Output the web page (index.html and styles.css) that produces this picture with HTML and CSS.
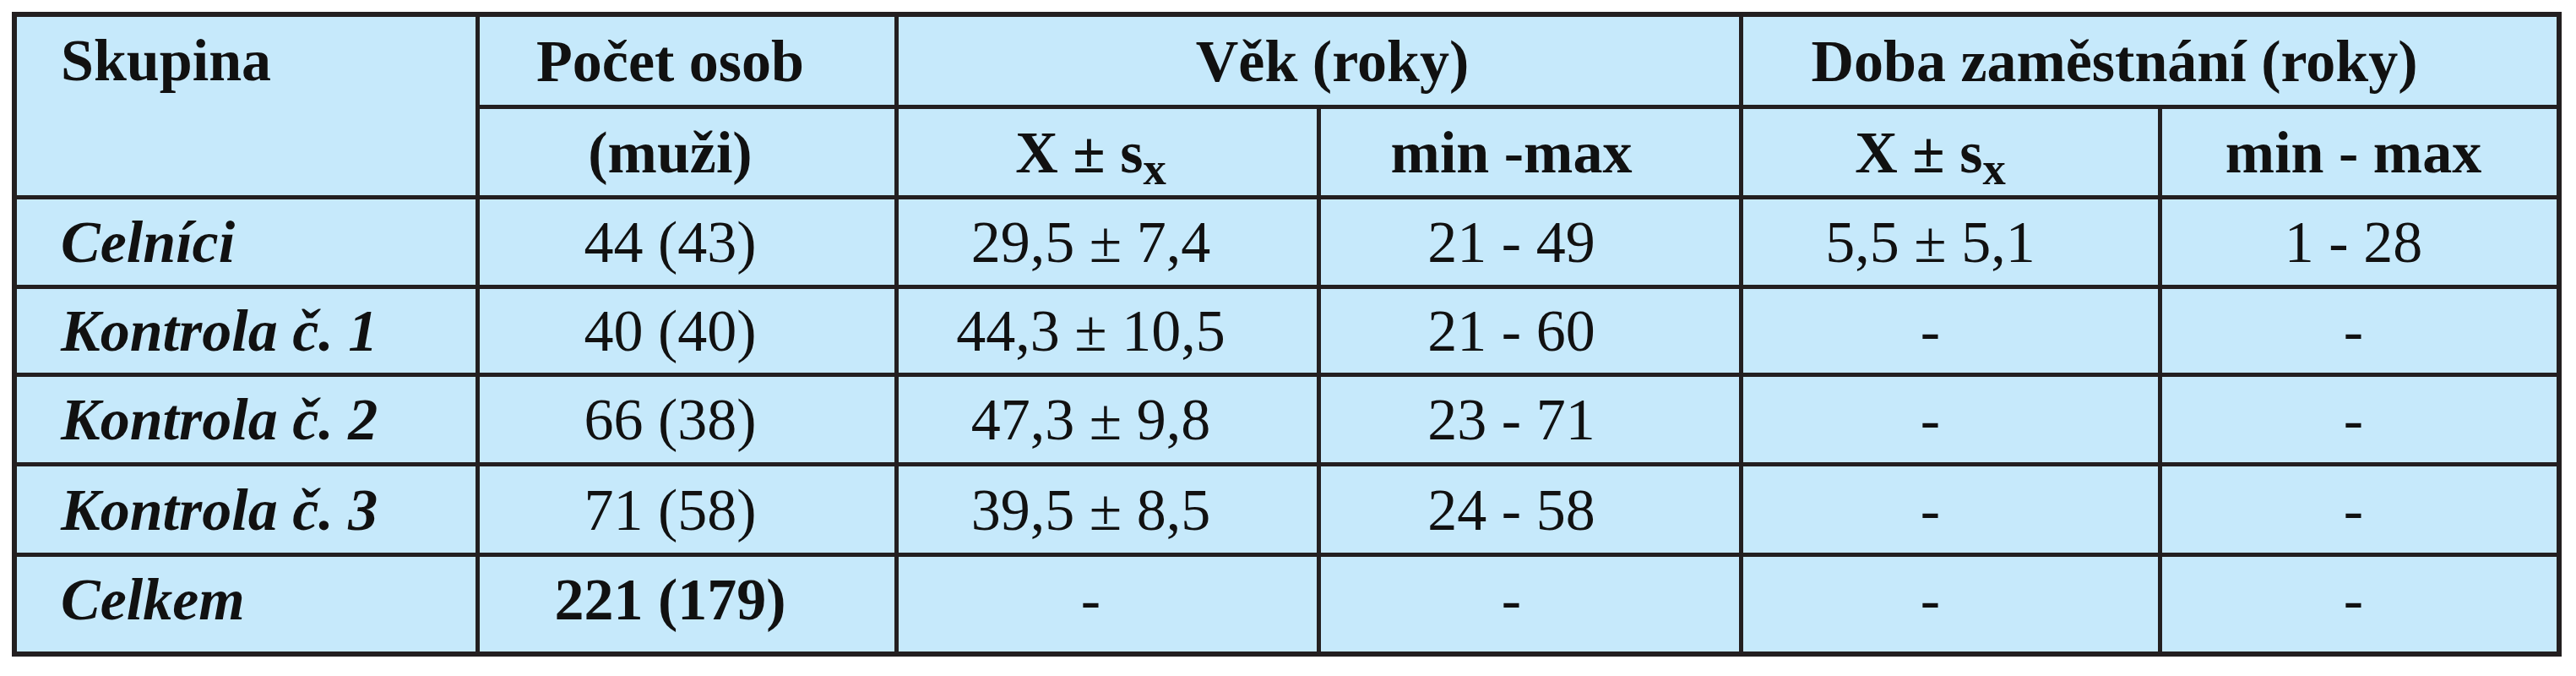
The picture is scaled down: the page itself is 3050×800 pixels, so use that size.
FILE: index.html
```html
<!DOCTYPE html>
<html lang="cs">
<head>
<meta charset="utf-8">
<title>Skupiny</title>
<link rel="stylesheet" href="styles.css">
</head>
<body>
<table class="tbl">
  <colgroup>
    <col class="w1"><col class="w2"><col class="w3"><col class="w4"><col class="w5"><col class="w6">
  </colgroup>
  <thead>
    <tr class="h1">
      <th class="c1 grp" rowspan="2">Skupina</th>
      <th class="c2">Počet osob</th>
      <th class="vek" colspan="2">Věk (roky)</th>
      <th class="doba last" colspan="2">Doba zaměstnání (roky)</th>
    </tr>
    <tr class="h2">
      <th class="c2">(muži)</th>
      <th class="c3">X ± s<sub class="sx">x</sub></th>
      <th class="c4">min -max</th>
      <th class="c5">X ± s<sub class="sx">x</sub></th>
      <th class="c6 last">min - max</th>
    </tr>
  </thead>
  <tbody>
    <tr class="b1">
      <td class="c1 name">Celníci</td>
      <td class="c2">44 (43)</td>
      <td class="c3">29,5 ± 7,4</td>
      <td class="c4">21 - 49</td>
      <td class="c5">5,5 ± 5,1</td>
      <td class="c6 last">1 - 28</td>
    </tr>
    <tr class="b2">
      <td class="c1 name">Kontrola č. 1</td>
      <td class="c2">40 (40)</td>
      <td class="c3">44,3 ± 10,5</td>
      <td class="c4">21 - 60</td>
      <td class="c5">-</td>
      <td class="c6 last">-</td>
    </tr>
    <tr class="b3">
      <td class="c1 name">Kontrola č. 2</td>
      <td class="c2">66 (38)</td>
      <td class="c3">47,3 ± 9,8</td>
      <td class="c4">23 - 71</td>
      <td class="c5">-</td>
      <td class="c6 last">-</td>
    </tr>
    <tr class="b4">
      <td class="c1 name">Kontrola č. 3</td>
      <td class="c2">71 (58)</td>
      <td class="c3">39,5 ± 8,5</td>
      <td class="c4">24 - 58</td>
      <td class="c5">-</td>
      <td class="c6 last">-</td>
    </tr>
    <tr class="b5 final">
      <td class="c1 name">Celkem</td>
      <td class="c2 strong">221 (179)</td>
      <td class="c3">-</td>
      <td class="c4">-</td>
      <td class="c5">-</td>
      <td class="c6 last">-</td>
    </tr>
  </tbody>
</table>
</body>
</html>
```
FILE: styles.css
```css
html, body {
  margin: 0;
  padding: 0;
  background: #ffffff;
}
body {
  padding: 14px;
  font-family: "Liberation Serif", "Times New Roman", serif;
  color: #111111;
}
.tbl {
  border-collapse: separate;
  border-spacing: 0;
  table-layout: fixed;
  width: 3019px;
  border: 6px solid #231f20;
  background: #c6e9fb;
  font-size: 70px;
  line-height: 1.1;
}
.w1 { width: 548px; }
.w2 { width: 496px; }
.w3 { width: 500px; }
.w4 { width: 500px; }
.w5 { width: 496px; }
.w6 { width: 467px; }

.tbl th, .tbl td {
  box-sizing: border-box;
  padding: 0;
  border-right: 5px solid #231f20;
  border-bottom: 5px solid #231f20;
  text-align: center;
  vertical-align: middle;
  white-space: nowrap;
  font-weight: normal;
}
.tbl th { font-weight: bold; }
.tbl .last { border-right: 0; }
.tbl .final td { border-bottom: 0; padding-bottom: 12px; }

.h1 { height: 109px; }
.h2 { height: 107px; }
.b1 { height: 106px; }
.b2 { height: 104px; }
.b3 { height: 106px; }
.b4 { height: 107px; }
.b5 { height: 112px; }

.tbl .c1 { text-align: left; padding-left: 52px; }
.tbl .grp { vertical-align: top; padding-top: 13px; }
.tbl .c2 { padding-right: 40px; }
.tbl .c3 { padding-right: 40px; }
.tbl .c4 { padding-right: 44px; }
.tbl .c5 { padding-right: 48px; }
.tbl .c6 { padding-right: 14px; }
.tbl .vek { padding-left: 32px; }
.tbl .doba { padding-right: 84px; }

.tbl .name { font-weight: bold; font-style: italic; }
.tbl .strong { font-weight: bold; }

.sx {
  font-size: 0.78em;
  vertical-align: -0.26em;
  line-height: 0;
}
```
